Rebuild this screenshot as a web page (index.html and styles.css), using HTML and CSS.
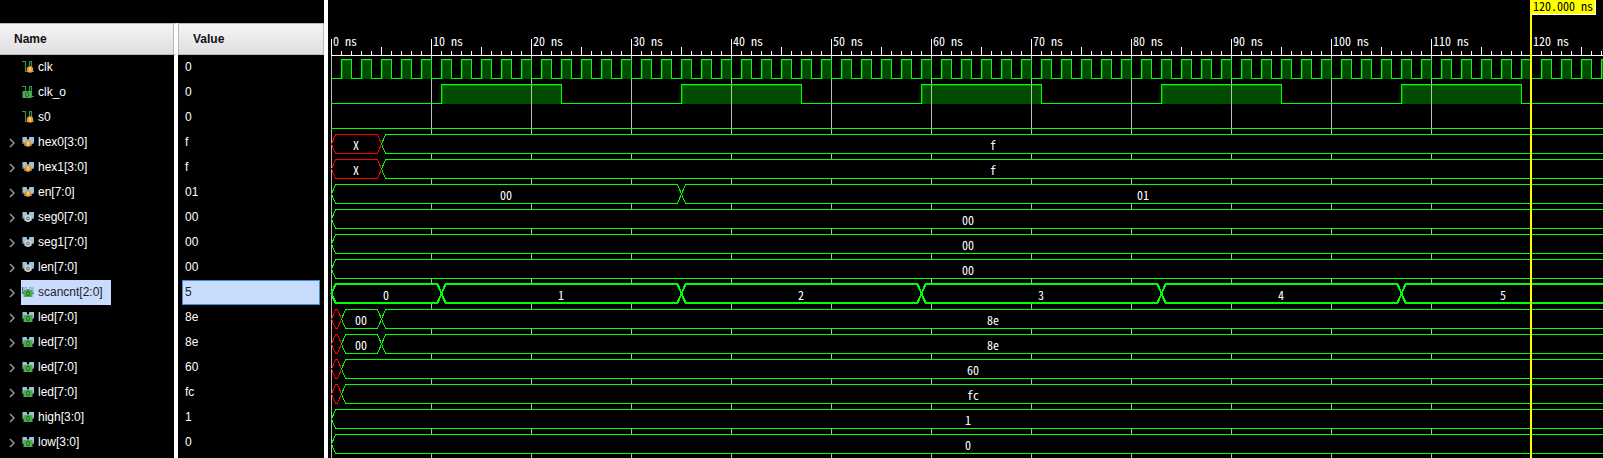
FILE: index.html
```html
<!DOCTYPE html>
<html lang="en">
<head>
<meta charset="utf-8">
<title>Waveform viewer</title>
<link rel="stylesheet" href="styles.css">
</head>
<body>
<svg class="defs" aria-hidden="true">
  <symbol id="wire" viewBox="0 0 13 13">
    <path d="M0 .5h3.500v10H7.500V.5h2v10H12" fill="none" stroke="#35964a" stroke-width="1.200"/>
  </symbol>
  <symbol id="bus" viewBox="0 0 13 13">
    <path d="M0 1h5v2h2V1h5v7h-2v2H2V8H0z" fill="#566873"/>
    <path d="M1 1h3.500l1 3.500v3H3L1 6zM7.500 1H12v5l-2 2H6.500V4.500z" fill="#9cc3d8"/>
  </symbol>
  <symbol id="in" viewBox="0 0 13 13">
    <circle cx="6" cy="7.500" r="3.200" fill="#f09a2c"/>
    <path d="M5.500 5.500h1.500L6.500 9.500h-1z" fill="#ffe0a8"/>
  </symbol>
  <symbol id="out" viewBox="0 0 13 13">
    <circle cx="6" cy="7.500" r="3.400" fill="#d4d4d4"/>
    <circle cx="6" cy="7.500" r="1.400" fill="none" stroke="#666"/>
  </symbol>
  <symbol id="reg" viewBox="0 0 13 13">
    <path d="M1.500 4h9v7h-9z" fill="#4bae4b"/>
    <ellipse cx="6" cy="7.500" rx="1.500" ry="2.300" fill="none" stroke="#28672b"/>
  </symbol>
</svg>
<main class="viewer">
  <section class="signals">
    <table class="list">
      <thead><tr><th class="name">Name</th><th class="value">Value</th></tr></thead>
      <tbody id="rows"></tbody>
      <tfoot><tr><td class="name"></td><td class="value"></td></tr></tfoot>
    </table>
  </section>
  <section class="waves" id="waves"></section>
</main>
<script src="waves.js"></script>
</body>
</html>
```

FILE: styles.css
```css
* { box-sizing: border-box; }
body { margin: 0; background: #000; color: #fff; font: 12px/15px "Liberation Sans", Arial, sans-serif; }
.defs { position: absolute; width: 0; height: 0; }
.viewer { display: flex; min-height: 100vh; overflow: hidden; }
.signals { flex: none; width: 328px; padding-top: 23px; border-right: 4px solid #fff; }
.list { width: 100%; border-collapse: separate; border-spacing: 0; table-layout: fixed; }
.list th { height: 32px; padding: 0 14px; text-align: left; color: #111; background: linear-gradient(#f5f5f5, #dfdfe2); border: solid #b9b9b9; border-width: 1px 1px 1px 0; }
.list td { height: 25px; padding: 0; }
.list .name { width: 178px; }
.list th.name { padding-right: 0; background: linear-gradient(#f5f5f5, #dfdfe2) padding-box; box-shadow: inset -1px 0 #b9b9b9; border-right: 4px solid #fff; }
.list td.name { border-right: 4px solid #fff; }
.list th.value { border-left-width: 1px; }
.list tfoot td { height: 3px; }
.item { display: flex; align-items: center; height: 25px; }
.toggle { width: 21px; height: 25px; padding: 0 0 0 9px; border: 0; background: none; display: flex; align-items: center; }
.toggle svg { width: 6px; height: 10px; fill: none; stroke: #999; stroke-width: 1.5px; }
.spacer { width: 21px; }
.tag { display: flex; align-items: center; gap: 3px; height: 25px; padding: 0 8px 0 1px; }
.icon { width: 13px; height: 13px; }
.reading { height: 25px; margin: 0 4px; padding: 4px 2px; border: 1px solid transparent; }
.selected .tag, .selected .reading { background: #cadcfe; color: #222; }
.selected .reading { border-color: #3d91cf; }
.waves { flex: 1; min-width: 0; }
.waves svg { display: block; }
.waves text { font: 12px "Noto Sans Mono CJK SC", "DejaVu Sans Mono", monospace; fill: #fff; }
.waves .stamp { fill: #000; }
.grid { fill: #bbb; }
.ruler { fill: #fff; }
.line { fill: none; stroke: #0f0; shape-rendering: crispEdges; }
.high { fill: #004c00; }
.glow { fill: #008000; }
.box { fill: #000; stroke: #0f0; shape-rendering: crispEdges; }
.unknown { stroke: #f00; }
.bold { stroke-width: 2px; }
.cursor { fill: #ff0; }
```

FILE: waves.js
```js
const pulses = [[11, 23], [35, 47], [59, 71], [83, 95], [107, 119]];
const clock = Array.from({ length: 400 }, (_, i) => [2 * i + 1, 2 * i + 2]);
const signals = [
  { name: 'clk', value: '0', kind: 'in', levels: clock },
  { name: 'clk_o', value: '0', kind: 'reg', levels: pulses },
  { name: 's0', value: '0', kind: 'in', levels: [] },
  { name: 'hex0[3:0]', value: 'f', kind: 'in', bus: [[0, 'X', 1], [5, 'f']] },
  { name: 'hex1[3:0]', value: 'f', kind: 'in', bus: [[0, 'X', 1], [5, 'f']] },
  { name: 'en[7:0]', value: '01', kind: 'in', bus: [[0, '00'], [35, '01']] },
  { name: 'seg0[7:0]', value: '00', kind: 'out', bus: [[0, '00']] },
  { name: 'seg1[7:0]', value: '00', kind: 'out', bus: [[0, '00']] },
  { name: 'len[7:0]', value: '00', kind: 'out', bus: [[0, '00']] },
  { name: 'scancnt[2:0]', value: '5', kind: 'reg', selected: true,
    bus: [[0, '0'], [11, '1'], [35, '2'], [59, '3'], [83, '4'], [107, '5']] },
  { name: 'led[7:0]', value: '8e', kind: 'reg', bus: [[0, '', 1], [1, '00'], [5, '8e']] },
  { name: 'led[7:0]', value: '8e', kind: 'reg', bus: [[0, '', 1], [1, '00'], [5, '8e']] },
  { name: 'led[7:0]', value: '60', kind: 'reg', bus: [[0, '', 1], [1, '60']] },
  { name: 'led[7:0]', value: 'fc', kind: 'reg', bus: [[0, '', 1], [1, 'fc']] },
  { name: 'high[3:0]', value: '1', kind: 'reg', bus: [[0, '1']] },
  { name: 'low[3:0]', value: '0', kind: 'reg', bus: [[0, '0']] }
];
const ORIGIN = 3, SCALE = 10, TOP = 55, ROW = 25, CURSOR = 120;
const at = ns => ORIGIN + ns * SCALE;
const rect = (cls, x, y, w, h) => `<rect class="${cls}" x="${x}" y="${y}" width="${w}" height="${h}"/>`;

// Scalar icons carry their badge off centre, bus icons in the middle.
function icon(s) {
  const badge = s.bus ? `<use href="#${s.kind}"/>`
    : `<use href="#${s.kind}" x="${s.kind === 'in' ? 2 : -1}" y="1" width="13" height="13"/>`;
  return `<svg class="icon" viewBox="0 0 13 13" aria-hidden="true"><use href="#${s.bus ? 'bus' : 'wire'}"/>${badge}</svg>`;
}

document.getElementById('rows').innerHTML = signals.map(s => `
  <tr class="${s.selected ? 'selected' : ''}">
    <td class="name"><div class="item">${s.bus
      ? `<button class="toggle" aria-label="Expand ${s.name}"><svg viewBox="0 0 6 10"><path d="M1 1l4 4-4 4"/></svg></button>`
      : '<span class="spacer"></span>'}<span class="tag">${icon(s)}<span>${s.name}</span></span></div></td>
    <td class="value"><div class="reading">${s.value}</div></td>
  </tr>`).join('');

function draw() {
  const host = document.getElementById('waves');
  const width = host.clientWidth;
  const height = Math.max(window.innerHeight, TOP + ROW * signals.length + 3);
  const last = Math.ceil((width - ORIGIN) / SCALE);
  let out = '';

  signals.forEach((s, i) => {
    if (!s.levels) return;
    const hi = TOP + i * ROW + 4;
    s.levels.filter(p => p[0] <= last).forEach(([a, b]) => {
      out += rect('high', at(a), hi, (b - a) * SCALE, 20);
      out += rect('glow', at(a), hi + 1, (b - a) * SCALE, 1) + rect('glow', at(a) + 1, hi, 1, 20);
    });
  });
  for (let t = 0; t <= last; t++) {
    const y = t % 10 === 0 ? 39 : t % 5 === 0 ? 47 : 51;
    out += rect('ruler', at(t), y, 1, TOP - y);
    if (t % 10 === 0) {
      out += rect('grid', at(t), TOP, 1, height - TOP);
      out += `<text x="${at(t) + 2}" y="46">${t} ns</text>`;
    }
  }
  out += rect('ruler', ORIGIN, TOP, width, 1);

  signals.forEach((s, i) => {
    const hi = TOP + i * ROW + 4.5, lo = hi + 19, mid = hi + 9.5;
    if (s.levels) {
      let d = `M${ORIGIN} ${lo}`;
      s.levels.filter(p => p[0] <= last).forEach(([a, b]) => {
        d += `H${at(a) + .5}V${hi}H${at(b) + .5}V${lo}`;
      });
      out += `<path class="line" d="${d}H${width}"/>`;
      return;
    }
    s.bus.forEach(([t, label, unknown], k) => {
      const next = s.bus[k + 1];
      const a = at(t) + .5, b = next ? at(next[0]) + .5 : width + 10;
      const cls = 'box' + (unknown ? ' unknown' : '') + (s.selected ? ' bold' : '');
      const n = s.selected ? -.5 : 0;
      out += `<path class="${cls}" d="M${a} ${mid + n}L${a + 4} ${hi + n}H${b - 4}L${b} ${mid + n}L${b - 4} ${lo + n}H${a + 4}Z"/>`;
      const end = next ? at(next[0]) : width + 2;
      if (label) out += `<text x="${Math.round((at(t) + end) / 2)}" y="${hi + 15.5}" text-anchor="middle">${label}</text>`;
    });
  });

  out += rect('cursor', at(CURSOR) - 1, 0, 2, height);
  out += rect('ruler', at(CURSOR), 0, 65, 15) + rect('cursor', at(CURSOR), 0, 64, 14);
  out += `<text class="stamp" x="${at(CURSOR) + 2}" y="11">120.000 ns</text>`;
  host.innerHTML = `<svg width="${width}" height="${height}" role="img" aria-label="Signal waveforms">${out}</svg>`;
}
draw();
window.addEventListener('resize', draw);
```
